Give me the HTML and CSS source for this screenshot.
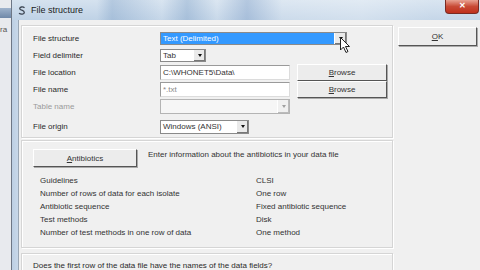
FILE: index.html
```html
<!DOCTYPE html>
<html lang="en">
	<head>
		<meta charset="UTF-8" />
		<link rel="stylesheet" href="styles.css">
	</head>
	<body>
		<div class="desktop">
			<!-- window behind the dialog -->
			<div class="behind">
				<div class="behind-bar"></div>
				<div class="behind-text">ra</div>
			</div>

			<div class="window">
				<div class="titlebar">
					<svg class="app-icon" width="8" height="9" viewBox="0 0 8 9">
						<path d="M6.5 1.8 C5 0.3 1.5 0.8 1.8 2.8 C2.2 4.6 6.3 3.8 6.3 6.4 C6.3 8.4 2.8 8.6 1 7.2" fill="none" stroke="#3a4350" stroke-width="1.3"/>
					</svg>
					<span class="title">File structure</span>
					<div class="close">&#x2715;</div>
				</div>

				<div class="client">
					<div class="main">
						<!-- file settings -->
						<div class="group group-file">
							<div class="row">
								<div class="label">File structure</div>
								<div class="combo combo-wide selected">
									<span class="combo-text">Text (Delimited)</span>
									<span class="arrow-btn"><i class="arrow"></i></span>
								</div>
							</div>
							<div class="row">
								<div class="label">Field delimiter</div>
								<div class="combo combo-tab">
									<span class="combo-text">Tab</span>
									<span class="arrow-btn"><i class="arrow"></i></span>
								</div>
							</div>
							<div class="row">
								<div class="label">File location</div>
								<div class="field">C:\WHONET5\Data\</div>
								<button class="btn browse"><u>B</u>rowse</button>
							</div>
							<div class="row">
								<div class="label">File name</div>
								<div class="field muted">*.txt</div>
								<button class="btn browse"><u>B</u>rowse</button>
							</div>
							<div class="row">
								<div class="label disabled">Table name</div>
								<div class="combo combo-disabled">
									<span class="combo-text"></span>
									<span class="arrow-btn flat"><i class="arrow grey"></i></span>
								</div>
							</div>
							<div class="row row-last">
								<div class="label">File origin</div>
								<div class="combo combo-origin">
									<span class="combo-text">Windows (ANSI)</span>
									<span class="arrow-btn"><i class="arrow"></i></span>
								</div>
							</div>
						</div>

						<!-- antibiotics -->
						<div class="group group-abx">
							<div class="abx-head">
								<button class="btn abx-btn"><u>A</u>ntibiotics</button>
								<span class="abx-note">Enter information about the antibiotics in your data file</span>
							</div>
							<div class="abx-list">
								<span>Guidelines</span><span>CLSI</span>
								<span>Number of rows of data for each isolate</span><span>One row</span>
								<span>Antibiotic sequence</span><span>Fixed antibiotic sequence</span>
								<span>Test methods</span><span>Disk</span>
								<span>Number of test methods in one row of data</span><span>One method</span>
							</div>
						</div>

						<!-- header row question -->
						<div class="group group-header">
							Does the first row of the data file have the names of the data fields?
						</div>
					</div>

					<div class="side">
						<button class="btn ok-btn"><u>O</u>K</button>
					</div>
				</div>
			</div>

			<!-- mouse pointer over the first drop down -->
			<svg class="cursor" width="11" height="17" viewBox="0 0 11 17">
				<path d="M0.5 0.5 L0.5 13 L3.5 10 L6 15.5 L8 14.5 L5.5 9.5 L9.5 9.5 Z" fill="#fff" stroke="#222" stroke-width="1"/>
			</svg>
		</div>
	</body>
</html>
```

FILE: styles.css
```css
body {
	margin: 0;
	font-family: "Liberation Sans", Arial, sans-serif;
	font-size: 8px;
	color: #333;
	background: #f0f0f0;
	overflow: hidden;
}

.desktop {
	position: relative;
	display: flex;
	width: 480px;
	height: 270px;
	overflow: hidden;
}

.behind {
	width: 11px;
	flex: none;
	background: #e8eaee;
	border-right: 1px solid #6d7786;
}

.behind-bar {
	height: 10px;
	margin-top: 8px;
	background: linear-gradient(#9fb3cc, #6f88a8);
}

.behind-text {
	margin-top: 7px;
	color: #555;
	font-size: 8px;
}

.window {
	flex: 1;
	display: flex;
	flex-direction: column;
	background: linear-gradient(90deg, #bccfe3 0, #c8d8ea 6px, #f0f0f0 6px);
}

.titlebar {
	height: 20px;
	flex: none;
	display: flex;
	align-items: center;
	background:
		linear-gradient(90deg, rgba(255,255,255,0) 0, rgba(255,255,255,0) 85px, rgba(120,155,195,0.35) 100px, rgba(255,255,255,0.1) 150px, rgba(120,155,195,0.35) 175px, rgba(255,255,255,0.15) 205px, rgba(130,160,200,0.4) 235px, rgba(255,255,255,0.2) 270px, rgba(255,255,255,0.3) 350px, rgba(255,255,255,0.1) 420px),
		linear-gradient(#d5e2ef, #bfd2e6);
}

.app-icon {
	margin-left: 6px;
	margin-top: 1px;
}

.title {
	margin-left: 5px;
	font-size: 9px;
	color: #1b1b1b;
}

.close {
	margin-left: auto;
	align-self: flex-start;
	width: 32px;
	height: 13px;
	margin-right: 1px;
	background: linear-gradient(#e8a292, #c84a35 50%, #c0301c);
	border: 1px solid #7a2a22;
	border-top: none;
	border-radius: 0 0 4px 4px;
	color: #fff;
	font-size: 8px;
	font-weight: bold;
	text-align: center;
	line-height: 12px;
}

.client {
	flex: 1;
	display: flex;
	margin-left: 6px;
	background: #f0f0f0;
	border-left: 1px solid #9aa7b5;
}

.main {
	width: 372px;
	flex: none;
	margin-left: 2px;
	display: flex;
	flex-direction: column;
}

.group {
	border: 1px solid #d5d5d5;
	box-shadow: inset 1px 1px 0 #fff, 1px 1px 0 #fff;
	box-sizing: border-box;
}

.group-file {
	margin-top: 5px;
	height: 113px;
	padding: 4px 0 0 11px;
}

.row {
	height: 17px;
	display: flex;
	align-items: center;
}

.row-last {
	margin-top: 3px;
}

.label {
	width: 127px;
	flex: none;
	color: #2a2a2a;
}

.label.disabled {
	color: #9a9a9a;
}

.combo {
	height: 13px;
	display: flex;
	align-items: center;
	background: #fff;
	border: 1px solid #8a8a8a;
	box-sizing: border-box;
}

.combo-text {
	flex: 1;
	padding-left: 2px;
	white-space: nowrap;
}

.combo-wide {
	width: 187px;
}

.combo-wide.selected .combo-text {
	background: #3399ff;
	color: #fff;
	align-self: stretch;
	line-height: 11px;
}

.combo-tab {
	width: 46px;
}

.combo-disabled {
	width: 130px;
	height: 15px;
	background: #f6f6f6;
	border-color: #b4b4b4;
}

.combo-origin {
	width: 89px;
	height: 14px;
}

.arrow-btn {
	width: 11px;
	align-self: stretch;
	display: flex;
	align-items: center;
	justify-content: center;
	background: #eaeaea;
	border-left: 1px solid #fff;
	box-shadow: inset -1px -1px 0 #777;
}

.arrow-btn.flat {
	background: #f0f0f0;
	box-shadow: inset -1px -1px 0 #bbb;
}

.arrow {
	width: 0;
	height: 0;
	border-left: 2.5px solid transparent;
	border-right: 2.5px solid transparent;
	border-top: 3px solid #111;
}

.arrow.grey {
	border-top-color: #a0a0a0;
}

.field {
	width: 130px;
	height: 15px;
	line-height: 13px;
	padding-left: 2px;
	background: #fff;
	border: 1px solid #9a9a9a;
	border-right-color: #dcdcdc;
	border-bottom-color: #dcdcdc;
	box-sizing: border-box;
	white-space: nowrap;
}

.field.muted {
	color: #8a8a8a;
}

.btn {
	font-family: inherit;
	font-size: 8px;
	color: #333;
	background: #ececec;
	border: 1px solid #fff;
	border-right-color: #555;
	border-bottom-color: #555;
	box-shadow: 1px 1px 0 #aaa;
	padding: 0;
	box-sizing: border-box;
}

.browse {
	width: 90px;
	height: 17px;
	margin-left: 7px;
}

.group-abx {
	margin-top: 2px;
	height: 108px;
	padding: 8px 0 0 11px;
}

.abx-head {
	display: flex;
	align-items: flex-start;
}

.abx-btn {
	width: 104px;
	height: 18px;
}

.abx-note {
	margin-left: 11px;
	margin-top: 1px;
}

.abx-list {
	margin-top: 7px;
	padding-left: 7px;
	display: grid;
	grid-template-columns: 216px auto;
	grid-auto-rows: 13px;
	align-items: center;
	color: #333;
}

.group-header {
	margin-top: 5px;
	height: 20px;
	padding: 7px 0 0 11px;
	border-bottom: none;
	color: #2a2a2a;
}

.side {
	flex: 1;
	padding: 7px 0 0 5px;
}

.ok-btn {
	width: 79px;
	height: 19px;
}

.cursor {
	position: absolute;
	left: 340px;
	top: 37px;
}
```
